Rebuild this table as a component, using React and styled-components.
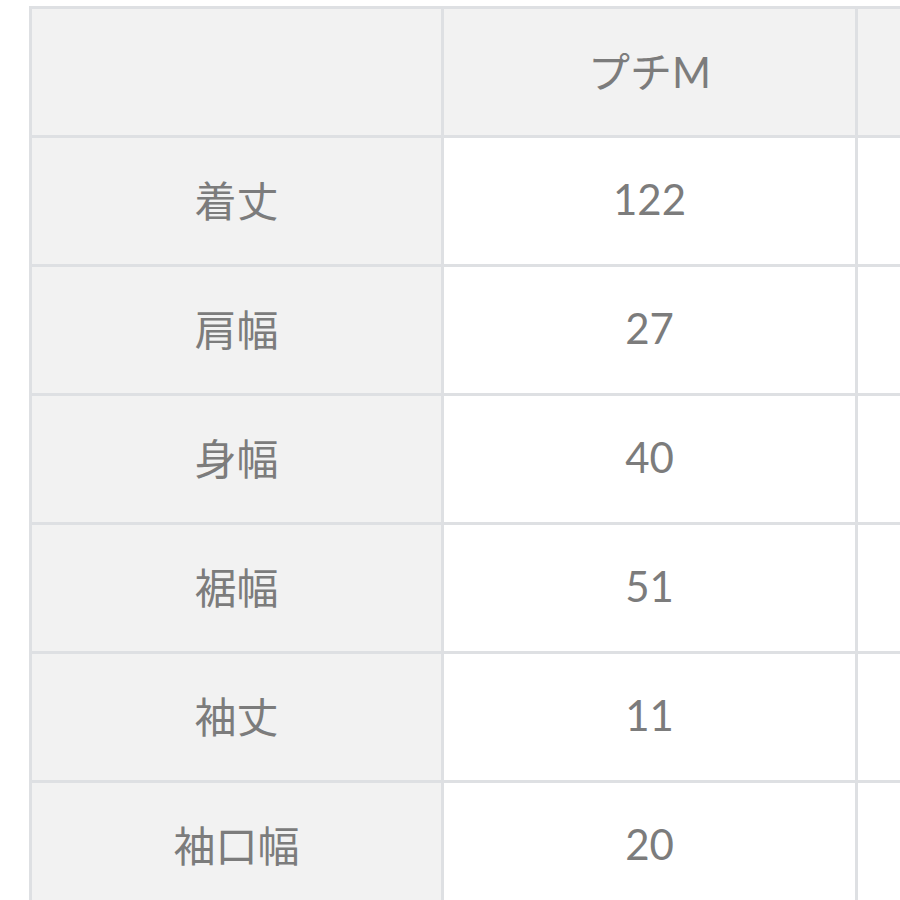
import styled, { createGlobalStyle } from "styled-components";

const GlobalStyle = createGlobalStyle`
  html, body {
    margin: 0;
    padding: 0;
    background: #fff;
    overflow: hidden;
  }
`;

const columns = ["プチM", ""];

const rows = [
  { label: "着丈", values: ["122", ""] },
  { label: "肩幅", values: ["27", ""] },
  { label: "身幅", values: ["40", ""] },
  { label: "裾幅", values: ["51", ""] },
  { label: "袖丈", values: ["11", ""] },
  { label: "袖口幅", values: ["20", ""] },
];

export default function App() {
  return (
    <>
      <GlobalStyle />
      <Page>
        <SizeTable>
          <Cell $head />
          {columns.map((c, i) => (
            <Cell key={"h" + i} $head>{c}</Cell>
          ))}
          {rows.map(r => (
            <Row key={r.label} label={r.label} values={r.values} />
          ))}
        </SizeTable>
      </Page>
    </>
  );
}

function Row({ label, values }) {
  return (
    <>
      <Cell $head>{label}</Cell>
      {values.map((v, i) => (
        <Cell key={i}>{v}</Cell>
      ))}
    </>
  );
}

// --- STYLED COMPONENTS ---

const Page = styled.div`
  width: 900px;
  height: 900px;
  overflow: hidden;
  padding: 6px 0 0 29px;
  box-sizing: border-box;
`;

const SizeTable = styled.div`
  display: grid;
  grid-template-columns: 409px 411px 200px;
  grid-auto-rows: 126px;
  gap: 3px;
  padding: 3px;
  background: #dee0e3;
  width: max-content;
  font-family: Lato, "Noto Sans CJK JP", sans-serif;
`;

const Cell = styled.div`
  display: flex;
  align-items: center;
  justify-content: center;
  background: ${p => (p.$head ? "#f2f2f2" : "#ffffff")};
  color: #7c7c7c;
  font-size: 42px;
  padding-bottom: 5px;
  box-sizing: border-box;
`;
